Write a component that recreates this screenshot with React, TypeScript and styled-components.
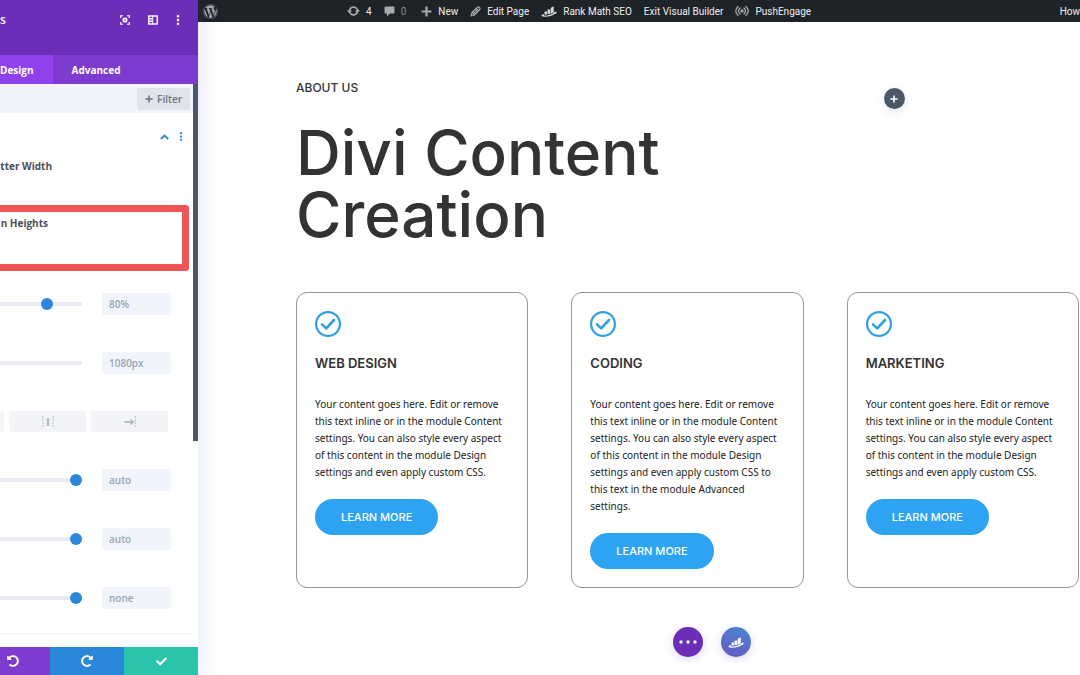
import React from 'react';
import styled, { createGlobalStyle } from 'styled-components';
import { FaUndoAlt, FaRedoAlt, FaCheck, FaWordpress } from 'react-icons/fa';

const GlobalStyle = createGlobalStyle`
  *, *::before, *::after { box-sizing: border-box; }
  body { margin: 0; background: #fff; overflow-x: hidden; }
  button, input { font: inherit; border: 0; margin: 0; padding: 0; }
  button { cursor: pointer; background: none; color: inherit; }
  a { color: inherit; text-decoration: none; }
  svg { display: block; flex: none; }
`;

const Page = styled.div`
  display: flex;
  min-height: 100vh;
  font-family: "Open Sans", sans-serif;
  color: #333;
`;

/* Settings panel */

const Panel = styled.aside`
  flex: none;
  width: 198px;
  display: flex;
  flex-direction: column;
  background: #fff;
  box-shadow: 0 0 24px rgba(60, 100, 220, 0.18);
  z-index: 1;
`;

const PanelHeader = styled.header`
  display: flex;
  align-items: flex-start;
  justify-content: space-between;
  height: 55px;
  padding: 11px 18px 0 0;
  background: #6c2eb9;
  color: #fff;
`;

const PanelTitle = styled.h2`
  margin: 0;
  font-size: 12px;
  line-height: 18px;
  font-weight: 600;
`;

const HeaderActions = styled.div`
  display: flex;
  align-items: center;
  gap: 18px;
  height: 18px;
`;

const IconButton = styled.button`
  display: grid;
  place-items: center;
`;

const Tabs = styled.nav`
  display: flex;
  height: 29px;
  background: #7e3bd0;
`;

const Tab = styled.button<{ $active?: boolean }>`
  padding: 0 19px 0 ${(p) => (p.$active ? '0' : '19px')};
  background: ${(p) => (p.$active ? '#8f42ec' : 'transparent')};
  color: #fff;
  font-size: 10px;
  font-weight: 700;
`;

const PanelBody = styled.div`
  flex: 1;
  display: flex;
`;

const Settings = styled.div`
  flex: 1;
  min-width: 0;
`;

const Scrollbar = styled.div`
  width: 5px;
  height: 357px;
  background: #4c5866;
`;

const FilterBar = styled.div`
  display: flex;
  justify-content: flex-end;
  align-items: center;
  height: 29px;
  padding-right: 3px;
  background: #f1f4fa;
`;

const FilterButton = styled.button`
  display: flex;
  align-items: center;
  gap: 4px;
  height: 22px;
  padding: 0 8px;
  border-radius: 2px;
  background: #dfe3ec;
  color: #6a7380;
  font-size: 10px;
  font-weight: 600;
`;

const SectionHead = styled.div`
  display: flex;
  justify-content: flex-end;
  align-items: center;
  gap: 10px;
  height: 47px;
  padding-right: 10px;
  color: #2b87da;
`;

const FieldLabel = styled.div`
  display: flex;
  justify-content: flex-end;
  width: 52px;
  margin-bottom: 32px;
  white-space: nowrap;
  font-size: 10px;
  line-height: 13px;
  font-weight: 700;
  color: #4c5058;
`;

const Highlight = styled.div`
  height: 66px;
  margin-right: 4px;
  border: 7px solid #ef5555;
  border-left: 0;
  border-radius: 0 4px 4px 0;
  padding-top: 5px;
`;

const HighlightLabel = styled(FieldLabel)`
  width: 48px;
  margin: 0;
`;

const Fields = styled.div`
  display: flex;
  flex-direction: column;
  gap: 37px;
  padding: 22px 0 24px;
  border-bottom: 1px solid #f3f4f7;
`;

const SliderRow = styled.div`
  display: flex;
  align-items: center;
  gap: 20px;
  height: 22px;
`;

const Range = styled.input<{ $hideThumb?: boolean }>`
  appearance: none;
  width: 82px;
  height: 12px;
  background: linear-gradient(#e8ebf1, #e8ebf1) center / 100% 4px no-repeat;

  &::-webkit-slider-thumb {
    appearance: none;
    width: 12px;
    height: 12px;
    border-radius: 50%;
    background: ${(p) => (p.$hideThumb ? 'transparent' : '#2b87da')};
  }
`;

const ValueInput = styled.input`
  width: 69px;
  height: 22px;
  padding: 0 7px;
  border-radius: 2px;
  background: #f1f4fa;
  color: #98a5b5;
  font-size: 10px;
  font-weight: 600;
`;

const AlignRow = styled.div`
  display: flex;
  gap: 5px;
  height: 21px;
`;

const AlignButton = styled.button<{ $cut?: boolean }>`
  width: ${(p) => (p.$cut ? '4px' : '77px')};
  display: grid;
  place-items: center;
  border-radius: 2px;
  background: #f3f4f8;
  color: #b4bac4;
`;

const PanelFooter = styled.footer`
  display: flex;
  justify-content: flex-end;
  height: 28px;
  overflow: hidden;
  color: #fff;
`;

const FooterButton = styled.button<{ $color: string }>`
  flex: none;
  width: 74px;
  display: grid;
  place-items: center;
  background: ${(p) => p.$color};
`;

/* Site preview */

const Preview = styled.div`
  flex: 1;
  min-width: 0;
`;

const AdminBar = styled.nav`
  display: flex;
  align-items: center;
  gap: 12px;
  height: 22px;
  padding-left: 5px;
  background: #1d2327;
  color: #f0f0f1;
  font-family: Roboto, sans-serif;
  font-size: 10px;
  white-space: nowrap;
`;

const AdminItem = styled.a<{ $dim?: boolean }>`
  display: flex;
  align-items: center;
  gap: 6px;
  padding-right: ${(p) => (p.$dim ? '3px' : '0')};
  color: ${(p) => (p.$dim ? '#8a8e92' : 'inherit')};

  svg { color: #a7aaad; }
`;

const SiteLogo = styled(AdminItem)`
  margin-right: 117px;
`;

const Account = styled(AdminItem)`
  margin-left: auto;
`;

const Content = styled.main`
  padding: 57px 1px 18px 98px;
`;

const Intro = styled.section`
  display: grid;
  grid-template-columns: 1fr 1fr;
  gap: 43px;
  font-family: Inter, sans-serif;
`;

const Eyebrow = styled.p`
  margin: 0 0 25px;
  font-size: 12px;
  line-height: 18px;
  font-weight: 500;
`;

const Title = styled.h1`
  margin: 0;
  font-size: 62px;
  line-height: 62px;
  font-weight: 500;
`;

const AddModule = styled.button`
  justify-self: center;
  margin-top: 9px;
  width: 21px;
  height: 21px;
  display: grid;
  place-items: center;
  border-radius: 50%;
  background: #4c5866;
  color: #fff;
  box-shadow: 0 3px 8px rgba(60, 80, 160, 0.15);
`;

const Cards = styled.section`
  display: grid;
  grid-template-columns: repeat(3, 1fr);
  gap: 43px;
  margin-top: 46px;
`;

const Card = styled.article`
  padding: 18px;
  border: 1px solid #999;
  border-radius: 11px;
`;

const CardTitle = styled.h3`
  margin: 17px 0 24px;
  font-family: Inter, sans-serif;
  font-size: 13px;
  line-height: 18px;
  font-weight: 600;
`;

const CardText = styled.p`
  margin: 0 0 18px;
  font-family: "Noto Sans", "Open Sans", sans-serif;
  font-size: 10px;
  line-height: 17px;
  color: #222;
`;

const LearnMore = styled.a`
  display: inline-flex;
  align-items: center;
  height: 36px;
  padding: 0 26px;
  border-radius: 18px;
  background: #2ea3f2;
  color: #fff;
  font-family: Inter, sans-serif;
  font-size: 11px;
  font-weight: 500;
  vertical-align: top;
`;

const FloatingActions = styled.div`
  display: grid;
  grid-template-columns: 1fr auto 1fr;
  gap: 18px;
  margin-top: 39px;
`;

const RoundButton = styled.button<{ $fill: string }>`
  width: 30px;
  height: 30px;
  display: grid;
  place-items: center;
  border-radius: 50%;
  background: ${(p) => p.$fill};
  color: #fff;
  box-shadow: 0 2px 8px rgba(80, 50, 200, 0.2);

  &:first-child { grid-column: 2; }
`;

const Dots = ({ size = 10 }: { size?: number }) => (
  <svg width="4" height={size} viewBox="0 0 4 12" fill="currentColor">
    <circle cx="2" cy="1.6" r="1.5" /><circle cx="2" cy="6" r="1.5" /><circle cx="2" cy="10.4" r="1.5" />
  </svg>
);

const PlusIcon = ({ size, weight = 2 }: { size: number; weight?: number }) => (
  <svg width={size} height={size} viewBox="0 0 10 10" stroke="currentColor" strokeWidth={weight}>
    <path d="M5 0.5V9.5M0.5 5H9.5" />
  </svg>
);

const FocusIcon = () => (
  <svg width="10" height="10" viewBox="0 0 20 20" fill="none" stroke="currentColor" strokeWidth="2.4">
    <path d="M1.5 6V1.5H6M14 1.5H18.5V6M18.5 14V18.5H14M6 18.5H1.5V14" />
    <circle cx="10" cy="10" r="3.4" strokeWidth="3.4" />
  </svg>
);

const DockIcon = () => (
  <svg width="10" height="10" viewBox="0 0 20 20" fill="none" stroke="currentColor" strokeWidth="2.8">
    <rect x="1.5" y="2" width="17" height="16" />
    <path d="M9.5 2V18M3 7H8M3 10H8M3 13H8" strokeWidth="2" />
  </svg>
);

const SyncIcon = () => (
  <svg width="13" height="12" viewBox="0 0 26 24" fill="none" stroke="currentColor" strokeWidth="3.4">
    <path d="M5 12A8 8 0 0 1 19.5 7.5M21 12A8 8 0 0 1 6.5 16.5" />
    <path d="M0 11H10L5 17.5ZM16 13H26L21 6.5Z" fill="currentColor" stroke="none" />
  </svg>
);

const CommentIcon = () => (
  <svg width="11" height="11" viewBox="0 0 22 22" fill="currentColor">
    <path d="M3 1H19Q21 1 21 3V13Q21 15 19 15H12L6 21V15H3Q1 15 1 13V3Q1 1 3 1Z" />
  </svg>
);

const PencilIcon = () => (
  <svg width="11" height="11" viewBox="0 0 22 22" fill="none" stroke="currentColor" strokeWidth="2.2" strokeLinejoin="round">
    <path d="M2 20L4 13L15 2.5Q17 1 19 3Q21 5 19.5 7L9 18ZM4.5 13L9 17.5M13 5L17.5 9.5M7 15L15 7" />
  </svg>
);

const RankMark = styled.svg<{ $tone: string }>`
  && { color: ${(p) => p.$tone}; }
`;

const RankIcon = ({ tone = '#fff' }: { tone?: string }) => (
  <RankMark $tone={tone} width="16" height="11" viewBox="0 0 32 22" fill="currentColor">
    <path d="M7 11H12V16.5L7 17.5ZM13 7H18.5V15.5L13 16.5ZM19.5 3.5L25.5 0.5V12Q23 14.5 19.5 15.4Z" />
    <path d="M0.5 18.5Q4 15.5 6 16.5V19.2Q19 19 26 13.5L24.5 12.5L31.5 11L30 16.5L28.5 15Q21 21.5 7 21.5Q2 21.5 0.5 18.5Z" />
  </RankMark>
);

const SignalIcon = () => (
  <svg width="14" height="12" viewBox="0 0 28 24" fill="none" stroke="currentColor" strokeWidth="2.6" strokeLinecap="round">
    <path d="M6 3Q-3 12 6 21M10 6Q4 12 10 18M22 3Q31 12 22 21M18 6Q24 12 18 18" />
    <circle cx="14" cy="12" r="2" fill="currentColor" />
  </svg>
);

const CircleCheck = () => (
  <svg width="26" height="26" viewBox="0 0 26 26" fill="none" stroke="#2e9fe6">
    <circle cx="13" cy="13" r="11.9" strokeWidth="2.2" />
    <path d="M7 13.4L11.2 17.4L19 9" strokeWidth="2.6" strokeLinecap="round" strokeLinejoin="round" />
  </svg>
);

const AlignCenterIcon = () => (
  <svg width="12" height="12" viewBox="0 0 12 12" fill="none" stroke="currentColor">
    <path d="M1 0V12M11 0V12" strokeDasharray="2 1" />
    <path d="M6 2V10" strokeWidth="2.4" />
  </svg>
);

const AlignRightIcon = () => (
  <svg width="12" height="12" viewBox="0 0 12 12" fill="none" stroke="currentColor">
    <path d="M11.3 0V12" strokeDasharray="2 1" />
    <path d="M0.5 6H8" strokeWidth="1.8" />
    <path d="M6.5 2.5L10.5 6L6.5 9.5Z" fill="currentColor" stroke="none" />
  </svg>
);

const Slider = ({ name, at, value, hideThumb }: { name: string; at: number; value: string; hideThumb?: boolean }) => (
  <SliderRow>
    <Range type="range" aria-label={name} defaultValue={at} $hideThumb={hideThumb} />
    <ValueInput type="text" aria-label={`${name} value`} defaultValue={value} />
  </SliderRow>
);

const baseText =
  'Your content goes here. Edit or remove this text inline or in the module Content settings. You can also style every aspect of this content in the module Design settings and even apply custom CSS';

const cards = [
  { title: 'WEB DESIGN', text: `${baseText}.` },
  { title: 'CODING', text: `${baseText} to this text in the module Advanced settings.` },
  { title: 'MARKETING', text: `${baseText}.` },
];

export default function App() {
  return (
    <>
      <GlobalStyle />
      <Page>
        <Panel>
          <PanelHeader>
            <PanelTitle>s</PanelTitle>
            <HeaderActions>
              <IconButton aria-label="Focus"><FocusIcon /></IconButton>
              <IconButton aria-label="Dock panel"><DockIcon /></IconButton>
              <IconButton aria-label="More options"><Dots /></IconButton>
            </HeaderActions>
          </PanelHeader>
          <Tabs>
            <Tab $active>Design</Tab>
            <Tab>Advanced</Tab>
          </Tabs>
          <PanelBody>
            <Settings>
              <FilterBar>
                <FilterButton><PlusIcon size={8} /> Filter</FilterButton>
              </FilterBar>
              <SectionHead>
                <IconButton aria-label="Collapse section">
                  <svg width="9" height="6" viewBox="0 0 9 6" fill="none" stroke="currentColor" strokeWidth="1.8">
                    <path d="M0.8 5L4.5 1.5L8.2 5" />
                  </svg>
                </IconButton>
                <IconButton aria-label="Section options"><Dots size={9} /></IconButton>
              </SectionHead>
              <FieldLabel>tter Width</FieldLabel>
              <Highlight>
                <HighlightLabel>n Heights</HighlightLabel>
              </Highlight>
              <Fields>
                <Slider name="Width" at={59} value="80%" />
                <Slider name="Max width" at={0} value="1080px" hideThumb />
                <AlignRow>
                  <AlignButton $cut aria-label="Align left" />
                  <AlignButton aria-label="Align center"><AlignCenterIcon /></AlignButton>
                  <AlignButton aria-label="Align right"><AlignRightIcon /></AlignButton>
                </AlignRow>
                <Slider name="Min height" at={100} value="auto" />
                <Slider name="Height" at={100} value="auto" />
                <Slider name="Max height" at={100} value="none" />
              </Fields>
            </Settings>
            <Scrollbar />
          </PanelBody>
          <PanelFooter>
            <FooterButton $color="#7e3bd0" aria-label="Undo"><FaUndoAlt size={12} /></FooterButton>
            <FooterButton $color="#2b87da" aria-label="Redo"><FaRedoAlt size={12} /></FooterButton>
            <FooterButton $color="#29c4a9" aria-label="Save"><FaCheck size={11} /></FooterButton>
          </PanelFooter>
        </Panel>

        <Preview>
          <AdminBar>
            <SiteLogo href="#" aria-label="WordPress"><FaWordpress size={15} /></SiteLogo>
            <AdminItem href="#"><SyncIcon />4</AdminItem>
            <AdminItem href="#" $dim><CommentIcon />0</AdminItem>
            <AdminItem href="#"><PlusIcon size={11} weight={2} />New</AdminItem>
            <AdminItem href="#"><PencilIcon />Edit Page</AdminItem>
            <AdminItem href="#"><RankIcon tone="#d5d7d9" />Rank Math SEO</AdminItem>
            <AdminItem href="#">Exit Visual Builder</AdminItem>
            <AdminItem href="#"><SignalIcon />PushEngage</AdminItem>
            <Account href="#">How</Account>
          </AdminBar>
          <Content>
            <Intro>
              <div>
                <Eyebrow>ABOUT US</Eyebrow>
                <Title>Divi Content Creation</Title>
              </div>
              <AddModule aria-label="Add module"><PlusIcon size={8} weight={2} /></AddModule>
            </Intro>
            <Cards>
              {cards.map((card) => (
                <Card key={card.title}>
                  <CircleCheck />
                  <CardTitle>{card.title}</CardTitle>
                  <CardText>{card.text}</CardText>
                  <LearnMore href="#">LEARN MORE</LearnMore>
                </Card>
              ))}
            </Cards>
            <FloatingActions>
              <RoundButton $fill="#6c2eb9" aria-label="Page settings">
                <svg width="18" height="4" viewBox="0 0 18 4" fill="currentColor">
                  <circle cx="2" cy="2" r="1.7" /><circle cx="9" cy="2" r="1.7" /><circle cx="16" cy="2" r="1.7" />
                </svg>
              </RoundButton>
              <RoundButton $fill="linear-gradient(20deg, #6359c4, #4c86d4)" aria-label="Rank Math">
                <RankIcon />
              </RoundButton>
            </FloatingActions>
          </Content>
        </Preview>
      </Page>
    </>
  );
}
